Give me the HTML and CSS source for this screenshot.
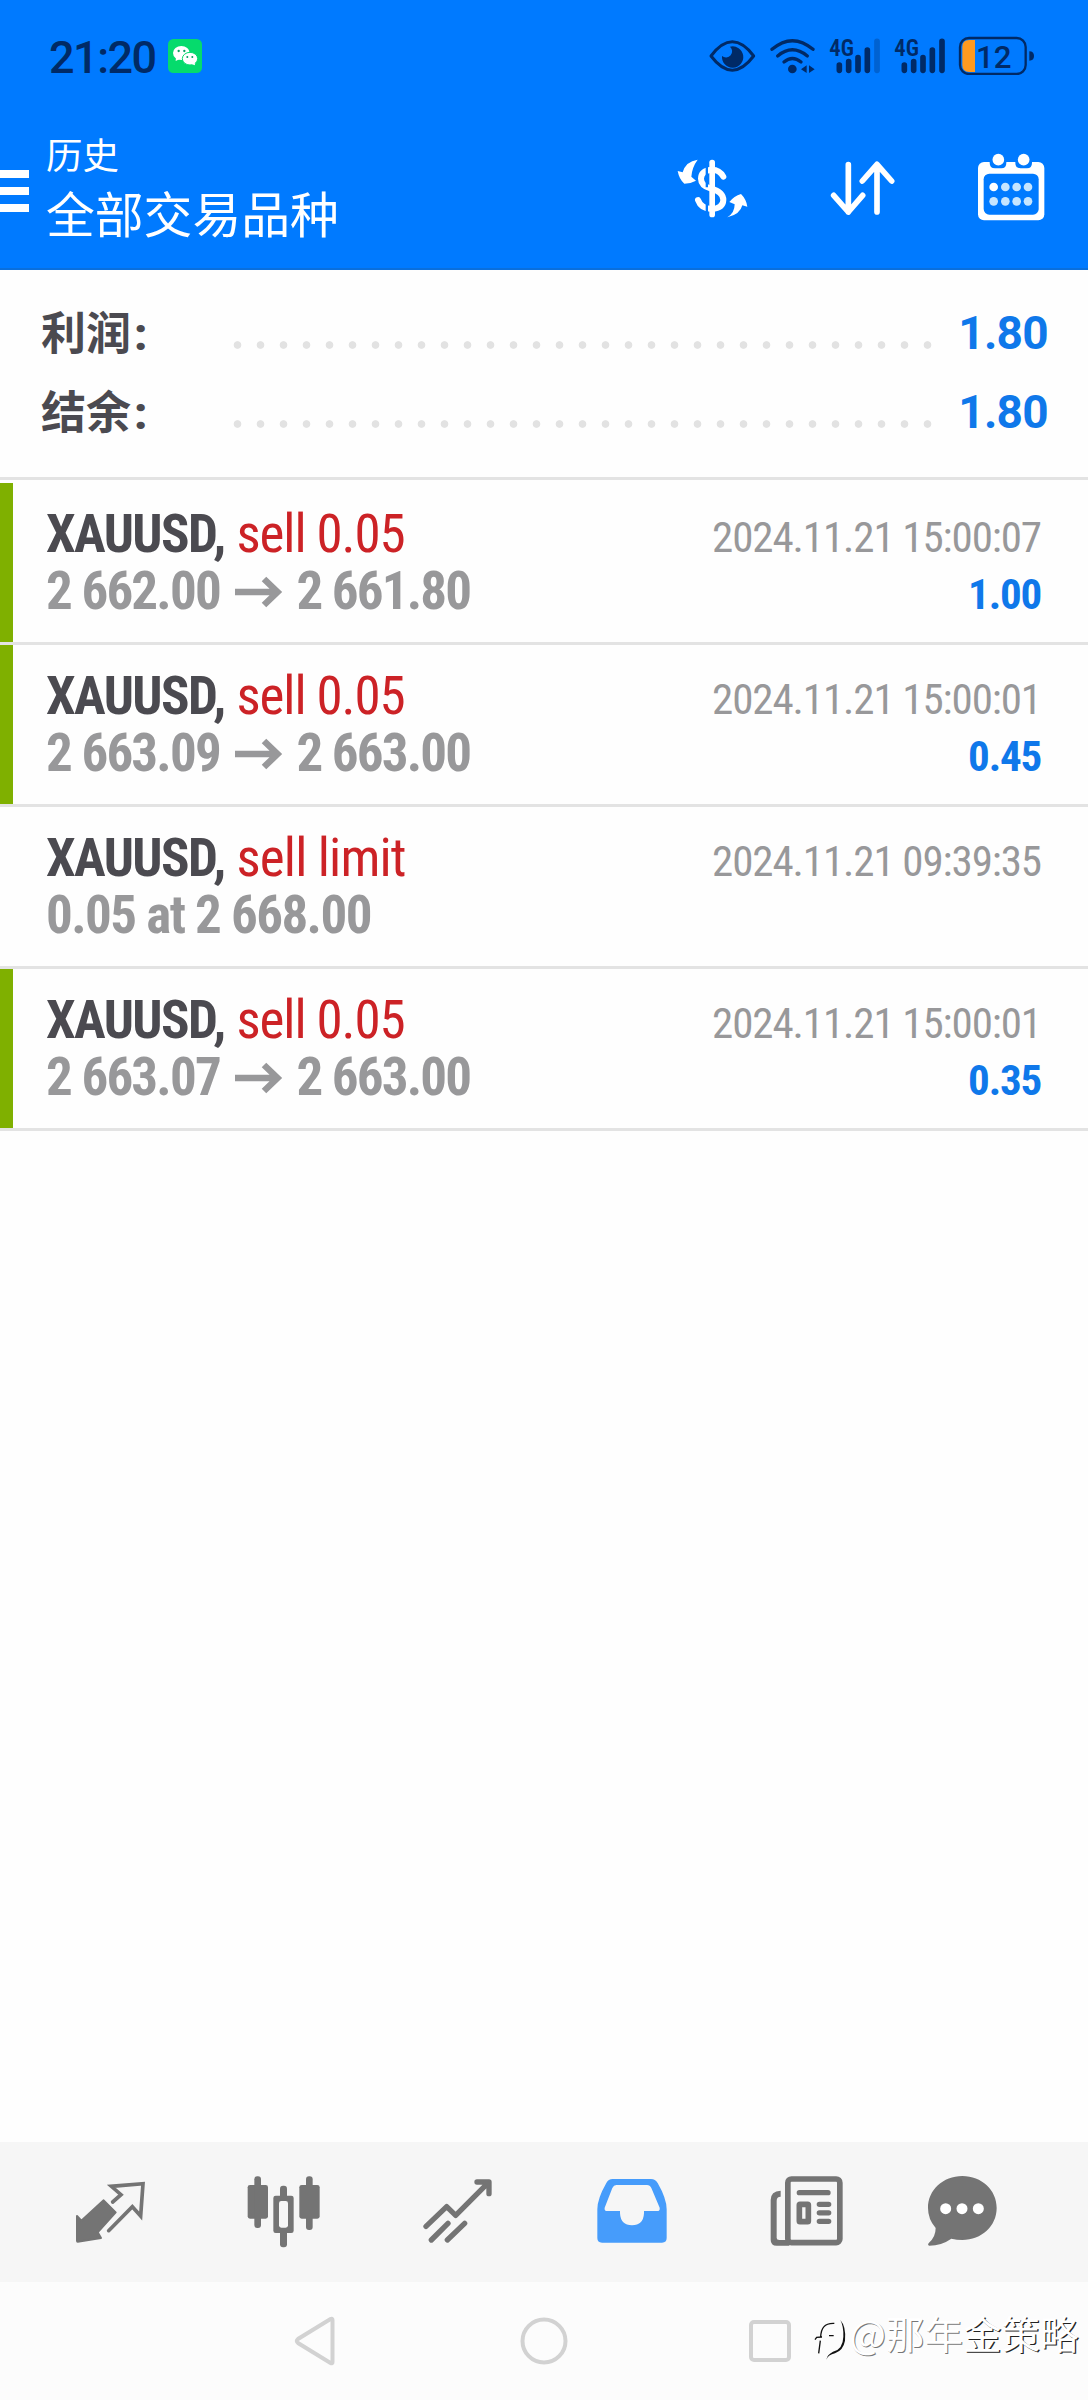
FILE: index.html
```html
<!DOCTYPE html>
<html lang="zh-CN">
<head>
<meta charset="utf-8">
<title>历史</title>
<link rel="stylesheet" href="styles.css">
</head>
<body>
<div class="phone">
  <header class="header">
    <div class="status">
      <span class="time">21:20</span>
      <svg class="wechat" viewBox="504 117 102 102"><rect x="504" y="117" width="102" height="102" rx="16" fill="#05db6c"/><ellipse cx="544" cy="159" rx="25" ry="21" fill="#fff"/><path d="M528 172l-1 11 13-6z" fill="#fff"/><ellipse cx="570" cy="176" rx="23" ry="19" fill="#fff" stroke="#05db6c" stroke-width="3"/><path d="M574 192l11 4-1-9z" fill="#fff"/><g fill="#05a060"><circle cx="536" cy="153" r="3.5"/><circle cx="553" cy="153" r="3.5"/><circle cx="562" cy="171" r="3"/><circle cx="577" cy="171" r="3"/></g></svg>
      <div class="indicators">
        <svg width="50" height="40" viewBox="81 105 150 120"><path d="M93 168Q157 83 221 168Q157 253 93 168Z" fill="none" stroke="#002a66" stroke-width="9" stroke-linejoin="round"/><path d="M150 140A32 32 0 1 1 126 168A17 17 0 0 0 150 140Z" fill="#002a66"/></svg>
        <svg width="50" height="40" viewBox="261 105 150 120"><g fill="none" stroke="#002a66" stroke-width="10" stroke-linecap="round"><path d="M276 148Q337 96 399 148"/><path d="M293 168Q337 131 382 168"/><path d="M312 186Q337 165 363 186"/></g><circle cx="337" cy="207" r="13" fill="#002a66"/><path d="M380 196v23l-17-11.500zM387 196v23l17-11.500z" fill="#002a66"/></svg>
        <svg width="55" height="40" viewBox="441 105 165 120"><text class="net" x="448" y="167" textLength="74" lengthAdjust="spacingAndGlyphs">4G</text><g stroke="#002a66" stroke-width="17" stroke-linecap="round"><path d="M478 195v16M506 185v26M534 173v38M562 150v61"/><path d="M591 124v87" stroke-opacity=".3"/></g></svg>
        <svg width="55" height="40" viewBox="636 105 165 120"><text class="net" x="643" y="167" textLength="74" lengthAdjust="spacingAndGlyphs">4G</text><path d="M673 195v16M701 185v26M729 173v38M757 150v61M786 124v87" stroke="#002a66" stroke-width="17" stroke-linecap="round"/></svg>
        <svg width="80" height="40" viewBox="831 105 240 120"><rect x="840" y="114" width="197" height="108" rx="27" fill="none" stroke="#002a66" stroke-width="7"/><path d="M885 120v96h-17q-21 0-21-21v-54q0-21 21-21z" fill="#ff9a1f"/><path d="M1048 154q14 0 14 14t-14 14z" fill="#002a66"/><text class="level" x="888" y="204">12</text></svg>
      </div>
    </div>
    <div class="appbar">
      <div class="menu"><i></i><i></i><i></i></div>
      <div class="titles"><div class="title">历史</div><div class="subtitle">全部交易品种</div></div>
      <div class="actions">
        <svg width="90" height="80" viewBox="30 30 270 240"><g fill="none" stroke="#fff" stroke-width="18" stroke-linecap="round"><path d="M190 110Q178 88 154 89Q123 92 123 116Q123 137 153 146Q190 156 190 180Q189 205 156 207Q123 206 114 180"/></g><path d="M137 78h7v64h-7zM137 154h7v64h-7z" fill="#007aff"/><rect x="148" y="59" width="17" height="173" rx="8" fill="#fff"/><path d="M113 59Q77 64 68 97L53 93Q58 119 73 131Q92 131 108 122L94 110Q96 82 113 59ZM202 232Q224 219 224 193L208 186Q222 168 243 162Q259 178 262 200L247 196Q240 224 202 232Z" fill="#fff"/></svg>
        <svg width="75" height="80" viewBox="435 450 225 240"><path d="M505 494v142M461 586l44 50 43-50M591 636V494M547 543l44-50 44 50" fill="none" stroke="#fff" stroke-width="17" stroke-linecap="round" stroke-linejoin="round"/></svg>
        <svg width="80" height="80" viewBox="870 450 240 240"><rect x="894" y="486" width="199" height="175" rx="18" fill="#fff"/><rect x="911" y="521" width="165" height="123" rx="17" fill="#007aff"/><path d="M929 480v8q0 17 16 17h19q15 0 15-17v-8zM1006 480v8q0 17 16 17h19q15 0 15-17v-8z" fill="#007aff"/><circle cx="955" cy="479" r="17.500" fill="#fff"/><circle cx="1031" cy="479" r="17.500" fill="#fff"/><circle cx="941" cy="561" r="13" fill="#fff"/><g fill="#c6e5ff"><circle cx="976" cy="561" r="13"/><circle cx="1010" cy="561" r="13"/><circle cx="1044" cy="561" r="13"/><circle cx="941" cy="604" r="13"/><circle cx="976" cy="604" r="13"/><circle cx="1010" cy="604" r="13"/><circle cx="1044" cy="604" r="13"/></g></svg>
      </div>
    </div>
  </header>

  <main class="content">
    <section class="summary">
      <div class="total"><span class="label">利润<b>:</b></span><span class="dots"></span><span class="sum">1.80</span></div>
      <div class="total"><span class="label">结余<b>:</b></span><span class="dots"></span><span class="sum">1.80</span></div>
    </section>
    <section class="deals">
      <article class="deal closed">
        <div class="line"><span class="symbol">XAUUSD,</span><span class="side">sell 0.05</span><span class="date">2024.11.21 15:00:07</span></div>
        <div class="line"><span class="price">2 662.00</span><svg class="arrow" viewBox="0 0 48 32"><path d="M0 16h43M29 3l13.500 13L29 29" fill="none" stroke="#98989a" stroke-width="6.500"/></svg><span class="price">2 661.80</span><span class="profit">1.00</span></div>
      </article>
      <article class="deal closed">
        <div class="line"><span class="symbol">XAUUSD,</span><span class="side">sell 0.05</span><span class="date">2024.11.21 15:00:01</span></div>
        <div class="line"><span class="price">2 663.09</span><svg class="arrow" viewBox="0 0 48 32"><path d="M0 16h43M29 3l13.500 13L29 29" fill="none" stroke="#98989a" stroke-width="6.500"/></svg><span class="price">2 663.00</span><span class="profit">0.45</span></div>
      </article>
      <article class="deal">
        <div class="line"><span class="symbol">XAUUSD,</span><span class="side limit">sell limit</span><span class="date">2024.11.21 09:39:35</span></div>
        <div class="line"><span class="price order">0.05 at 2 668.00</span></div>
      </article>
      <article class="deal closed">
        <div class="line"><span class="symbol">XAUUSD,</span><span class="side">sell 0.05</span><span class="date">2024.11.21 15:00:01</span></div>
        <div class="line"><span class="price">2 663.07</span><svg class="arrow" viewBox="0 0 48 32"><path d="M0 16h43M29 3l13.500 13L29 29" fill="none" stroke="#98989a" stroke-width="6.500"/></svg><span class="price">2 663.00</span><span class="profit">0.35</span></div>
      </article>
    </section>
  </main>

  <nav class="tabs">
    <svg viewBox="15 0 270 300"><path d="M131 121l36 36-54 60 10 17-70 11q-2 0-2-3V168l13 14z" fill="#747474" stroke="#747474" stroke-width="6" stroke-linejoin="round"/><path d="M158 126l25-22-29-25 95-8-7 97-25-28-71 72" fill="none" stroke="#747474" stroke-width="11" stroke-linecap="round"/></svg>
    <svg viewBox="537 0 270 300"><g fill="#747474"><rect x="563" y="75" width="61" height="101" rx="7"/><rect x="583" y="49" width="20" height="155" rx="9"/><rect x="718" y="75" width="61" height="101" rx="7"/><rect x="738" y="49" width="20" height="161" rx="9"/><rect x="640" y="107" width="61" height="112" rx="7"/><rect x="660" y="77" width="21" height="185" rx="9"/></g><rect x="657" y="123" width="27" height="80" rx="7" fill="#f6f6f6"/></svg>
    <svg viewBox="1059 0 270 300"><path d="M1098 199l62-59 27 26 98-98M1251 66h36v35M1114 240l50-50M1162 240l52-50" fill="none" stroke="#747474" stroke-width="16" stroke-linecap="round" stroke-linejoin="round"/></svg>
    <svg viewBox="21 0 270 300"><path d="M98 57H213Q226 57 233 69Q260 116 260 148V234Q260 248 246 248H66Q52 248 52 234V148Q52 116 79 69Q85 57 98 57Z" fill="#469cfb"/><path d="M109 75H201Q210 75 214 84L239 143Q241 153 231 153H192V160Q190 196 156 196Q122 196 120 160V153H82Q72 153 74 143L97 84Q101 75 109 75Z" fill="#f6f6f6"/></svg>
    <svg viewBox="546 0 270 300"><rect x="623.500" y="57" width="156" height="191" rx="11" fill="none" stroke="#747474" stroke-width="17"/><path d="M602 92v18q-12 0-12 12v112q0 6 8 6h30v17h-38q-18 0-18-18V120q0-27 30-28z" fill="#747474"/><path d="M658 98h86M718 133h28M718 158.500h28M718 184h28" stroke="#747474" stroke-width="16" stroke-linecap="round"/><rect x="658" y="133" width="27" height="52" rx="2" fill="none" stroke="#747474" stroke-width="17"/></svg>
    <svg viewBox="1011 0 270 300"><path d="M1147 48C1205 48 1250 90 1250 144S1205 240 1147 240Q1130 240 1114 236Q1084 257 1048 257Q1041 255 1047 248Q1067 231 1067 204Q1044 178 1044 144C1044 90 1089 48 1147 48Z" fill="#747474"/><circle cx="1097" cy="146" r="16.500" fill="#fff"/><circle cx="1146" cy="146" r="16.500" fill="#fff"/><circle cx="1195" cy="146" r="16.500" fill="#fff"/></svg>
  </nav>

  <footer class="system">
    <svg class="back" width="44" height="50" viewBox="0 0 44 50"><path d="M38.500 4v42q0 2-2 1L4 27q-2.500-2 0-4L36.500 3q2-1 2 1z" fill="none" stroke="#d2d2d2" stroke-width="4"/></svg>
    <svg class="home" width="48" height="48" viewBox="0 0 48 48"><circle cx="24" cy="24" r="21.500" fill="none" stroke="#d2d2d2" stroke-width="4"/></svg>
    <svg class="recent" width="44" height="44" viewBox="0 0 44 44"><rect x="3" y="3" width="38" height="38" rx="3" fill="none" stroke="#d2d2d2" stroke-width="4"/></svg>
    <div class="watermark">
      <svg width="34" height="46" viewBox="218 56 102 138"><path d="M282 78q-22-1-31 10-9 10-10 31M224 127l5-7 16-1M240 130l-5 38M266 115h14" fill="none" stroke="#111" stroke-width="4"/><path d="M300 68q18 20 14 62-5 28-30 38-20 4-26 19 2-15 20-24 30-7 31-45 1-32-9-50z" fill="#111"/></svg>
      <span>@那年</span><strong>金策略</strong>
    </div>
  </footer>
</div>
</body>
</html>
```
FILE: styles.css
```css
* { box-sizing: border-box; }
body { margin: 0; background: #fefefe; font-family: Roboto, "Noto Sans CJK SC", sans-serif; }
svg { display: block; flex: none; }

.phone { width: 1088px; height: 2400px; display: flex; flex-direction: column; overflow: hidden; }

.header { height: 270px; background: #007aff; color: #fff; border-bottom: 2px solid #0a6fdc; }
.status { height: 112px; display: flex; align-items: center; padding: 3px 51px 0 49px; color: #002a66; }
.time { font-size: 45px; font-weight: 500; letter-spacing: -1.5px; line-height: 50px; width: 119px; }
.wechat { width: 34px; height: 34px; margin-top: -3px; }
.indicators { display: flex; gap: 10px; margin: -5px 0 0 auto; }
.net { font: 600 69px "Roboto Condensed", Roboto, sans-serif; fill: #002a66; }
.level { font: 500 94px Roboto, sans-serif; fill: #002a66; }

.appbar { display: flex; height: 156px; }
.menu { width: 29px; display: flex; flex-direction: column; gap: 9px; padding-top: 58px; }
.menu i { height: 8px; background: #fff; }
.titles { padding: 16px 0 0 17px; font-family: "Noto Sans CJK SC", sans-serif; white-space: nowrap; }
.title { font-size: 36.500px; line-height: 52px; }
.subtitle { font-size: 48.800px; line-height: 64px; }
.actions { display: flex; margin-left: auto; padding: 38px 38px 0 0; }
.actions svg:nth-child(2) { margin: 0 70px 0 65px; }

.content { flex: 1; }
.summary { height: 210px; padding: 22px 40px 0 41px; border-bottom: 3px solid #e3e3e3; }
.total { height: 79px; display: flex; align-items: center; }
.label { width: 185px; font: 700 45px/79px "Noto Sans CJK SC", sans-serif; color: #4b4a50; margin-top: 2px; }
.label b { margin-left: 3px; font-family: Roboto, sans-serif; }
.dots { width: 713px; height: 8px; margin-top: 27px; background: radial-gradient(circle at center, #e2e2e2 3.400px, transparent 4.200px) 0 0 / 23px 8px; }
.sum { margin: 3px 0 0 auto; font-size: 46px; font-weight: 700; letter-spacing: -.7px; color: #0f78ea; }

.deals { padding-top: 3px; }
.deal { height: 162px; padding: 23px 47px 0 46px; border-bottom: 3px solid #e3e3e3; font-family: "Roboto Condensed", Roboto, sans-serif; }
.closed { background: linear-gradient(#7fb000, #7fb000) 0 0 / 13px 100% no-repeat padding-box; }
.line { height: 57px; line-height: 57px; display: flex; align-items: baseline; white-space: nowrap; font-size: 53px; }
.symbol { font-weight: 700; letter-spacing: -1.6px; color: #4b4a50; }
.side { margin-left: 12px; letter-spacing: -1.100px; color: #cc2226; }
.limit { letter-spacing: -.85px; }
.date { margin-left: auto; font-size: 43px; letter-spacing: -1.100px; color: #98989a; }
.price { font-weight: 700; letter-spacing: -1.800px; color: #98989a; }
.order { letter-spacing: -1.550px; }
.arrow { width: 48px; height: 32px; margin: 0 13px 0 15.500px; align-self: center; }
.profit { margin-left: auto; font-size: 43px; font-weight: 700; letter-spacing: -1.200px; color: #0f78ea; }

.tabs { height: 140px; padding: 18px 0 0 23px; background: #f6f6f6; display: grid; grid-template-columns: 174px 174px 174px 174px 175px 136px; justify-items: center; }
.tabs svg { width: 90px; height: 100px; }

.system { height: 118px; padding: 0 8px 0 294px; display: flex; align-items: center; background: #fcfcfc; }
.home { margin-left: 181.500px; }
.recent { margin-left: 180px; }
.watermark { display: flex; align-items: center; margin-left: 21px; font: 400 38.500px/58px "Noto Sans CJK SC", sans-serif; color: #fff; white-space: nowrap; margin-top: -18px; }
.watermark svg { margin: 14px 3px 0 0; }
.watermark span { text-shadow: 1px 1px 0 #777; }
.watermark strong { font-weight: 400; text-shadow: 1.300px 1.300px 0 #222; }
```
